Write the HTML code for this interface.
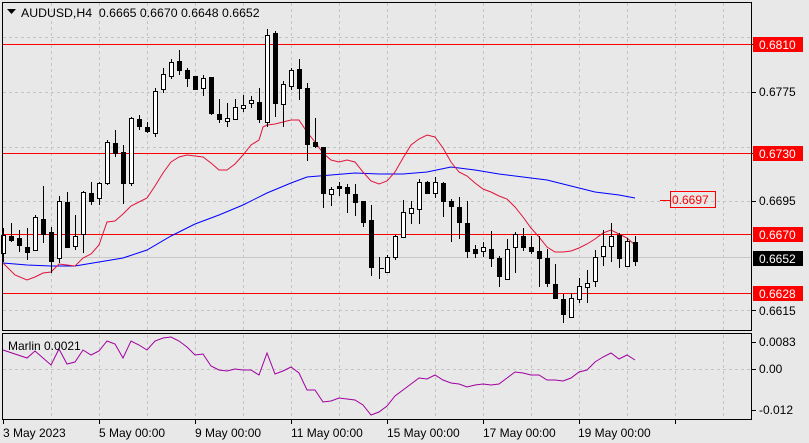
<!DOCTYPE html>
<html><head><meta charset="utf-8"><style>
html,body{margin:0;padding:0;background:#e8e8e8;}
svg{display:block;font-family:"Liberation Sans",sans-serif;}
</style></head><body>
<svg width="809" height="443" viewBox="0 0 809 443" xmlns="http://www.w3.org/2000/svg">
<rect width="809" height="443" fill="#e8e8e8"/>
<g stroke="#c4c4c4" stroke-dasharray="3,3" stroke-width="1">
<path d="M51.5 3V331M99.5 3V331M147.5 3V331M195.5 3V331M243.5 3V331M291.5 3V331M339.5 3V331M387.5 3V331M435.5 3V331M483.5 3V331M531.5 3V331M579.5 3V331M627.5 3V331M675.5 3V331M723.5 3V331"/>
<path d="M51.5 335V419M99.5 335V419M147.5 335V419M195.5 335V419M243.5 335V419M291.5 335V419M339.5 335V419M387.5 335V419M435.5 335V419M483.5 335V419M531.5 335V419M579.5 335V419M627.5 335V419M675.5 335V419M723.5 335V419"/>
<path d="M3 37.5H751M3 92.5H751M3 147.5H751M3 201.5H751M3 310.5H751M3 369.5H751"/>
</g>
<path d="M3 257.5H751" stroke="#c8c8c8"/>
<g stroke="#ff0000" stroke-width="1">
<path d="M3 44.5H751M3 153.5H751M3 234.5H751M3 293.5H751M660 200.5H670"/>
</g>
<polyline fill="none" stroke="#0000ff" stroke-width="1" points="3,263 27,265 51,266 75,266 99,262 123,258 147,250 171,236 195,224 219,215 243,205 267,193 291,183 307,177 331,175 355,173 379,174 403,174 427,172 451,167 475,170 499,174 523,177 547,180 571,186 595,192 619,195 635,198"/>
<polyline fill="none" stroke="#e0143c" stroke-width="1" points="3,263 15,275 27,280 35,277 43,273 51,272 59,264 67,265 75,266 83,258 91,254 99,245 107,222 115,221 123,214 131,206 139,202 147,198 155,186 163,173 171,162 179,157 187,155 195,156 203,157 211,163 219,170 227,170 235,164 243,155 251,145 259,140 263,127 267,125 275,124 283,122 291,120 299,120 307,132 315,142 323,153 331,160 339,162 347,160 355,162 363,172 371,181 379,184 387,181 395,172 403,158 411,145 419,139 427,135 435,137 443,148 451,162 459,172 467,176 475,183 483,189 491,192 499,196 507,199 515,207 523,217 531,228 539,237 547,247 555,252 563,252 571,251 579,248 587,244 595,239 603,233 611,230 619,234 627,238 635,245"/>
<path stroke="#000" stroke-width="1" fill="none" d="M3.5 228V262M11.5 223V242M19.5 230V252M27.5 228V260M35.5 215V250M43.5 186V243M51.5 227V273M59.5 196V263M67.5 192V247M75.5 215V250M83.5 191V253M91.5 182V205M99.5 182V205M107.5 140V185M115.5 130V157M123.5 145V204M131.5 117V186M139.5 115V130M147.5 122V133M155.5 88V137M163.5 68V93M171.5 59V79M179.5 50V75M187.5 68V87M195.5 76V90M203.5 75V96M211.5 77V115M219.5 99V123M227.5 103V127M235.5 99V120M243.5 95V112M251.5 96V108M259.5 88V123M267.5 29V127M275.5 31V117M283.5 81V127M291.5 68V90M299.5 59V100M307.5 83V161M315.5 118V148M323.5 147V208M331.5 187V206M339.5 182V196M347.5 184V213M355.5 184V216M363.5 201V227M371.5 205V276M379.5 257V279M387.5 255V273M395.5 235V260M403.5 200V238M411.5 201V224M419.5 179V224M427.5 181V194M435.5 177V198M443.5 182V217M451.5 199V242M459.5 197V239M467.5 201V258M475.5 245V258M483.5 242V257M491.5 231V267M499.5 256V287M507.5 239V280M515.5 232V273M523.5 228V251M531.5 236V254M539.5 236V287M547.5 249V287M555.5 264V299M563.5 294V323M571.5 293V318M579.5 278V303M587.5 270V303M595.5 250V287M603.5 230V266M611.5 223V262M619.5 233V268M627.5 238V267M635.5 236V266M379 268.5H384"/>
<g fill="#000" stroke="#000">
<rect x="9.5" y="236.5" width="4" height="4"/><rect x="17.5" y="238.5" width="4" height="7"/><rect x="25.5" y="247.5" width="4" height="5"/><rect x="41.5" y="219.5" width="4" height="15"/><rect x="49.5" y="232.5" width="4" height="29"/><rect x="65.5" y="202.5" width="4" height="45"/><rect x="89.5" y="193.5" width="4" height="8"/><rect x="113.5" y="143.5" width="4" height="10"/><rect x="121.5" y="152.5" width="4" height="31"/><rect x="137.5" y="119.5" width="4" height="7"/><rect x="145.5" y="127.5" width="4" height="4"/><rect x="177.5" y="61.5" width="4" height="9"/><rect x="185.5" y="70.5" width="4" height="8"/><rect x="193.5" y="76.5" width="4" height="13"/><rect x="209.5" y="77.5" width="4" height="36"/><rect x="217.5" y="114.5" width="4" height="5"/><rect x="257.5" y="102.5" width="4" height="17"/><rect x="273.5" y="33.5" width="4" height="70"/><rect x="297.5" y="69.5" width="4" height="19"/><rect x="305.5" y="88.5" width="4" height="56"/><rect x="313.5" y="142.5" width="4" height="4"/><rect x="321.5" y="147.5" width="4" height="46"/><rect x="337.5" y="186.5" width="4" height="2"/><rect x="345.5" y="187.5" width="4" height="6"/><rect x="353.5" y="194.5" width="4" height="8"/><rect x="361.5" y="201.5" width="4" height="21"/><rect x="369.5" y="220.5" width="4" height="47"/><rect x="425.5" y="182.5" width="4" height="11"/><rect x="441.5" y="183.5" width="4" height="18"/><rect x="449.5" y="201.5" width="4" height="5"/><rect x="457.5" y="207.5" width="4" height="15"/><rect x="465.5" y="223.5" width="4" height="28"/><rect x="473.5" y="249.5" width="4" height="4"/><rect x="489.5" y="249.5" width="4" height="9"/><rect x="497.5" y="258.5" width="4" height="18"/><rect x="521.5" y="236.5" width="4" height="11"/><rect x="529.5" y="247.5" width="4" height="4"/><rect x="537.5" y="251.5" width="4" height="7"/><rect x="545.5" y="258.5" width="4" height="25"/><rect x="553.5" y="284.5" width="4" height="14"/><rect x="561.5" y="299.5" width="4" height="15"/><rect x="617.5" y="235.5" width="4" height="23"/><rect x="633.5" y="242.5" width="4" height="19"/>
</g>
<g fill="#fff" stroke="#000">
<rect x="1.5" y="235.5" width="4" height="18"/><rect x="33.5" y="217.5" width="4" height="33"/><rect x="57.5" y="201.5" width="4" height="57"/><rect x="73.5" y="236.5" width="4" height="10"/><rect x="81.5" y="192.5" width="4" height="42"/><rect x="97.5" y="183.5" width="4" height="15"/><rect x="105.5" y="142.5" width="4" height="41"/><rect x="129.5" y="118.5" width="4" height="65"/><rect x="153.5" y="91.5" width="4" height="42"/><rect x="161.5" y="74.5" width="4" height="15"/><rect x="169.5" y="62.5" width="4" height="14"/><rect x="201.5" y="78.5" width="4" height="10"/><rect x="225.5" y="118.5" width="4" height="3"/><rect x="233.5" y="107.5" width="4" height="12"/><rect x="241.5" y="105.5" width="4" height="3"/><rect x="249.5" y="100.5" width="4" height="3"/><rect x="265.5" y="35.5" width="4" height="87"/><rect x="281.5" y="84.5" width="4" height="20"/><rect x="289.5" y="70.5" width="4" height="16"/><rect x="329.5" y="189.5" width="4" height="5"/><rect x="385.5" y="257.5" width="4" height="15"/><rect x="393.5" y="236.5" width="4" height="21"/><rect x="401.5" y="212.5" width="4" height="25"/><rect x="409.5" y="208.5" width="4" height="5"/><rect x="417.5" y="182.5" width="4" height="27"/><rect x="433.5" y="182.5" width="4" height="11"/><rect x="481.5" y="247.5" width="4" height="4"/><rect x="505.5" y="249.5" width="4" height="30"/><rect x="513.5" y="234.5" width="4" height="13"/><rect x="569.5" y="298.5" width="4" height="19"/><rect x="577.5" y="286.5" width="4" height="13"/><rect x="585.5" y="283.5" width="4" height="4"/><rect x="593.5" y="257.5" width="4" height="24"/><rect x="601.5" y="246.5" width="4" height="10"/><rect x="609.5" y="236.5" width="4" height="10"/><rect x="625.5" y="241.5" width="4" height="25"/>
</g>
<polyline fill="none" stroke="#a000a0" stroke-width="1" points="3,350 27,358 35,351 51,365 59,349 67,364 75,362 83,350 91,355 99,351 107,341 115,344 123,358 131,341 139,345 147,350 155,341 163,338 171,337 179,341 187,347 195,355 203,354 211,366 219,370 227,371 235,369 243,370 251,370 259,375 267,353 275,374 283,371 291,367 299,373 307,390 315,390 323,402 331,401 339,398 347,399 355,400 363,405 371,415 379,412 387,406 395,396 403,390 411,384 419,378 427,379 435,375 443,380 451,383 459,384 467,387 475,385 483,384 491,385 499,384 507,378 515,372 523,373 531,375 539,375 547,380 555,380 563,381 571,378 579,372 587,370 595,362 603,357 611,353 619,359 627,355 635,360"/>
<g stroke="#000" fill="none" stroke-width="1">
<rect x="2.5" y="2.5" width="749" height="328"/>
<rect x="2.5" y="333.5" width="749" height="86"/>
<path d="M752 44.5h4M752 92.5h4M752 153.5h4M752 201.5h4M752 310.5h4M752 342.5h4M752 369.5h4M752 410.5h4M3.5 420v4M99.5 420v4M195.5 420v4M291.5 420v4M387.5 420v4M483.5 420v4M579.5 420v4M675.5 420v4"/>
</g>
<path d="M7 9h9l-4.5 5z" fill="#000"/>
<text x="21" y="17" font-size="12.3" fill="#000" xml:space="preserve" style="white-space:pre">AUDUSD,H4  0.6665 0.6670 0.6648 0.6652</text>
<text x="8" y="350" font-size="12" fill="#000">Marlin 0.0021</text>
<g font-size="12" fill="#000">
<text x="759" y="96">0.6775</text>
<text x="759" y="205">0.6695</text>
<text x="759" y="315">0.6615</text>
<text x="759" y="346">0.0083</text>
<text x="759" y="373">0.00</text>
<text x="759" y="414">-0.012</text>
</g>
<g font-size="12">
<rect x="753" y="37" width="50" height="15" fill="#ff0000"/><text x="759" y="49" fill="#fff">0.6810</text>
<rect x="753" y="146" width="50" height="15" fill="#ff0000"/><text x="759" y="158" fill="#fff">0.6730</text>
<rect x="753" y="227" width="50" height="15" fill="#ff0000"/><text x="759" y="239" fill="#fff">0.6670</text>
<rect x="753" y="251" width="50" height="15" fill="#000"/><text x="759" y="263" fill="#fff">0.6652</text>
<rect x="753" y="286" width="50" height="15" fill="#ff0000"/><text x="759" y="298" fill="#fff">0.6628</text>
<rect x="670.5" y="191.5" width="45" height="16" fill="none" stroke="#ff0000"/><text x="672" y="204" fill="#ff0000">0.6697</text>
</g>
<g font-size="12" fill="#000">
<text x="3" y="437">3 May 2023</text>
<text x="99" y="437">5 May 00:00</text>
<text x="195" y="437">9 May 00:00</text>
<text x="291" y="437">11 May 00:00</text>
<text x="387" y="437">15 May 00:00</text>
<text x="483" y="437">17 May 00:00</text>
<text x="578" y="437">19 May 00:00</text>
</g>
</svg>
</body></html>
